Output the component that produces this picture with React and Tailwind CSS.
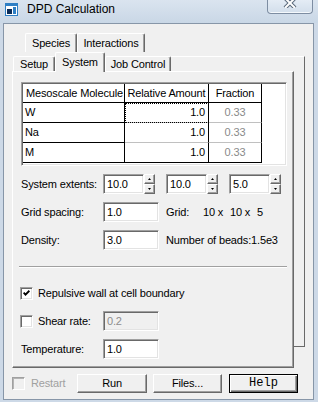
import React from "react";

const sunken =
  "border border-t-[#a0a0a0] border-l-[#a0a0a0] border-r-white border-b-white shadow-[inset_1px_1px_0_#696969,inset_-1px_-1px_0_#e3e3e3]";
const raised =
  "border border-t-white border-l-white border-r-[#696969] border-b-[#696969] shadow-[inset_-1px_-1px_0_#a0a0a0]";

function Edit({ value, w = "w-[56px]", disabled }) {
  return (
    <div
      className={`${w} h-[20px] ${sunken} ${
        disabled ? "bg-[#f0f0f0] text-[#8d8d8d]" : "bg-white text-black"
      } flex items-center pl-[3px] shrink-0`}
    >
      {value}
    </div>
  );
}

function Spin() {
  return (
    <div className="w-[11px] h-[20px] flex flex-col shrink-0">
      <div className={`h-[10px] ${raised} bg-[#f0f0f0] flex items-center justify-center`}>
        <svg width="3" height="2" viewBox="0 0 3 2">
          <path d="M1.5 0 L3 2 L0 2Z" fill="#000" />
        </svg>
      </div>
      <div className={`h-[10px] ${raised} bg-[#f0f0f0] flex items-center justify-center`}>
        <svg width="3" height="2" viewBox="0 0 3 2">
          <path d="M0 0 L3 0 L1.5 2Z" fill="#000" />
        </svg>
      </div>
    </div>
  );
}

function Check({ checked, disabled }) {
  return (
    <div
      className={`w-[13px] h-[13px] ${
        disabled
          ? "border border-t-[#a0a0a0] border-l-[#a0a0a0] border-r-white border-b-white shadow-[inset_1px_1px_0_#b4b4b4] bg-[#f0f0f0]"
          : `${sunken} bg-white`
      } flex items-center justify-center shrink-0`}
    >
      {checked && (
        <svg width="7" height="7" viewBox="0 0 7 7">
          <path d="M0.6 2.6 L2.5 4.6 L6.4 0.8" stroke="#000" strokeWidth="1.9" fill="none" />
        </svg>
      )}
    </div>
  );
}

function Tab({ label, w, h = "h-[19px]", selected }) {
  return (
    <div
      className={`${w} ${h} shrink-0 bg-[#f0f0f0] border-l border-t border-r border-l-white border-t-white border-r-[#696969] shadow-[inset_-1px_0_0_#a0a0a0] rounded-t-[2px] flex justify-center ${
        selected ? "-mb-px relative z-10 items-start pt-[3px]" : "items-center"
      }`}
    >
      <span className="leading-[13px]">{label}</span>
    </div>
  );
}

function Btn({ label, w, help }) {
  return (
    <div
      className={`${w} h-[19px] shrink-0 bg-[#f0f0f0] flex items-center justify-center ${
        help
          ? "border border-black shadow-[inset_1px_1px_0_#fff,inset_-1px_-1px_0_#696969,inset_-2px_-2px_0_#a0a0a0] font-['Liberation_Mono',monospace] text-[12px] tracking-normal"
          : raised
      }`}
    >
      {label}
    </div>
  );
}

const rows = [
  ["W", "1.0", "0.33"],
  ["Na", "1.0", "0.33"],
  ["M", "1.0", "0.33"],
];

export default function App() {
  return (
    <div className="w-[318px] h-[402px] overflow-hidden flex flex-col bg-[#cdd9e7] font-['Liberation_Sans',Arial,sans-serif] text-[11px] tracking-[-0.15px] text-black leading-[13px]">
      {/* Title bar */}
      <div className="h-[23px] shrink-0 flex items-start bg-linear-to-b from-[#dae4ef] to-[#c9d7e6]">
        <svg className="ml-[5px] mt-[3px]" width="13" height="13" viewBox="0 0 13 13">
          <rect x="0" y="0" width="13" height="13" fill="#2f7fc4" />
          <rect x="1" y="3" width="11" height="9" fill="#ffffff" />
          <rect x="2" y="6" width="5" height="5" fill="#0b2c57" />
          <rect x="8" y="4" width="3" height="7" fill="#2f7fc4" />
        </svg>
        <span className="ml-[9px] mt-[2px] text-[12px] tracking-normal leading-[14px]">DPD Calculation</span>
        <div className="ml-auto mr-[5px] w-[46px] h-[14px] border border-t-0 border-[#7d8da2] rounded-b-[4px] bg-linear-to-b from-[#e4ecf5] to-[#d2deeb] shadow-[inset_0_-1px_0_#f4f8fc] flex justify-center">
          <svg width="14" height="10" viewBox="0 0 14 10" className="-mt-[2px]">
            <path d="M2 0 L12 10 M12 0 L2 10" stroke="#5b6a7c" strokeWidth="4" />
            <path d="M2 0 L12 10 M12 0 L2 10" stroke="#ffffff" strokeWidth="2" />
          </svg>
        </div>
      </div>

      {/* Client area */}
      <div className="ml-[3px] w-[311px] flex-1 mb-[2px] border border-[#8796a8] bg-[#f0f0f0] flex flex-col">
        {/* top tab row */}
        <div className="mt-[9px] pl-[21px] flex h-[19px]">
          <Tab w="w-[52px]" label="Species" />
          <Tab w="w-[68px]" label="Interactions" />
        </div>
        {/* bottom tab row */}
        <div className="pl-[9px] flex items-end h-[19px]">
          <Tab w="w-[42px]" h="h-[15px]" label="Setup" />
          <Tab selected w="w-[50px]" h="h-[20px]" label="System" />
          <Tab w="w-[66px]" h="h-[15px]" label="Job Control" />
          <div className="w-[134px] h-[15px] shrink-0 border-t border-t-white border-r border-r-[#696969]" />
        </div>

        {/* pane row */}
        <div className="pl-[8px] flex items-start">
          <div className="w-[282px] h-[297px] shrink-0 border border-l-white border-t-white border-r-[#696969] border-b-[#696969] shadow-[inset_-1px_-1px_0_#a0a0a0] flex flex-col pl-[8px]">
            {/* table */}
            <div className={`mt-[10px] w-[266px] h-[84px] shrink-0 p-px ${sunken} bg-white`}>
              <div className="flex h-[19px]">
                <div className="w-[102px] border-r border-b border-black flex items-center pl-[3px] whitespace-nowrap overflow-hidden">
                  Mesoscale Molecule
                </div>
                <div className="w-[84px] border-r border-b border-black flex items-center justify-center whitespace-nowrap">
                  Relative Amount
                </div>
                <div className="w-[53px] border-r border-b border-black flex items-center justify-center">
                  Fraction
                </div>
              </div>
              {rows.map((r, i) => {
                const last = i === rows.length - 1;
                return (
                  <div key={r[0]} className="flex h-[20px]">
                    <div className="w-[102px] border-r border-b border-black flex items-center pl-[2px]">
                      {r[0]}
                    </div>
                    <div
                      className={`w-[84px] border-r border-black border-b ${
                        last ? "border-b-black" : "border-b-[#c0c0c0]"
                      } flex items-center justify-end pr-[3px] ${
                        i === 0 ? "outline outline-1 outline-dotted outline-black -outline-offset-1" : ""
                      }`}
                    >
                      {r[1]}
                    </div>
                    <div
                      className={`w-[53px] border-r border-black border-b ${
                        last ? "border-b-black" : "border-b-[#c0c0c0]"
                      } flex items-center justify-center text-[#8a8a8a]`}
                    >
                      {r[2]}
                    </div>
                  </div>
                );
              })}
            </div>

            {/* System extents */}
            <div className="mt-[8px] h-[20px] flex items-center">
              <span className="w-[82px] shrink-0">System extents:</span>
              <Edit w="w-[41px]" value="10.0" />
              <Spin />
              <div className="w-[11px] shrink-0" />
              <Edit w="w-[41px]" value="10.0" />
              <Spin />
              <div className="w-[11px] shrink-0" />
              <Edit w="w-[41px]" value="5.0" />
              <Spin />
            </div>

            {/* Grid spacing */}
            <div className="mt-[8px] h-[20px] flex items-center">
              <span className="w-[82px] shrink-0">Grid spacing:</span>
              <Edit value="1.0" />
              <span className="ml-[7px] w-[37px] shrink-0">Grid:</span>
              <span className="w-[27px] shrink-0">10 x</span>
              <span className="w-[27px] shrink-0">10 x</span>
              <span>5</span>
            </div>

            {/* Density */}
            <div className="mt-[8px] h-[20px] flex items-center">
              <span className="w-[82px] shrink-0">Density:</span>
              <Edit value="3.0" />
              <span className="ml-[7px] whitespace-nowrap">Number of beads:1.5e3</span>
            </div>

            {/* separator */}
            <div className="mt-[16px] -ml-[2px] w-[268px] h-[2px] shrink-0 border-t border-t-[#a0a0a0] border-b border-b-white" />

            {/* Repulsive wall */}
            <div className="mt-[19px] h-[13px] flex items-center -ml-px">
              <Check checked />
              <span className="ml-[5px]">Repulsive wall at cell boundary</span>
            </div>

            {/* Shear rate */}
            <div className="mt-[11px] h-[20px] flex items-center -ml-px">
              <Check />
              <span className="ml-[5px] w-[65px] shrink-0">Shear rate:</span>
              <Edit value="0.2" disabled />
            </div>

            {/* Temperature */}
            <div className="mt-[8px] h-[20px] flex items-center">
              <span className="w-[82px] shrink-0">Temperature:</span>
              <Edit value="1.0" />
            </div>
          </div>
          <div className="w-[11px] h-[276px] shrink-0 border-r border-b border-[#696969]" />
        </div>

        {/* bottom buttons */}
        <div className="mt-[6px] h-[19px] flex items-center">
          <div className="w-[73px] shrink-0 pl-[8px] flex items-center">
            <Check disabled />
            <span className="ml-[6px] text-[#a0a0a0]">Restart</span>
          </div>
          <Btn w="w-[70px]" label="Run" />
          <div className="w-[6px] shrink-0" />
          <Btn w="w-[69px]" label="Files..." />
          <div className="w-[7px] shrink-0" />
          <Btn w="w-[69px]" label="Help" help />
        </div>
      </div>
    </div>
  );
}
